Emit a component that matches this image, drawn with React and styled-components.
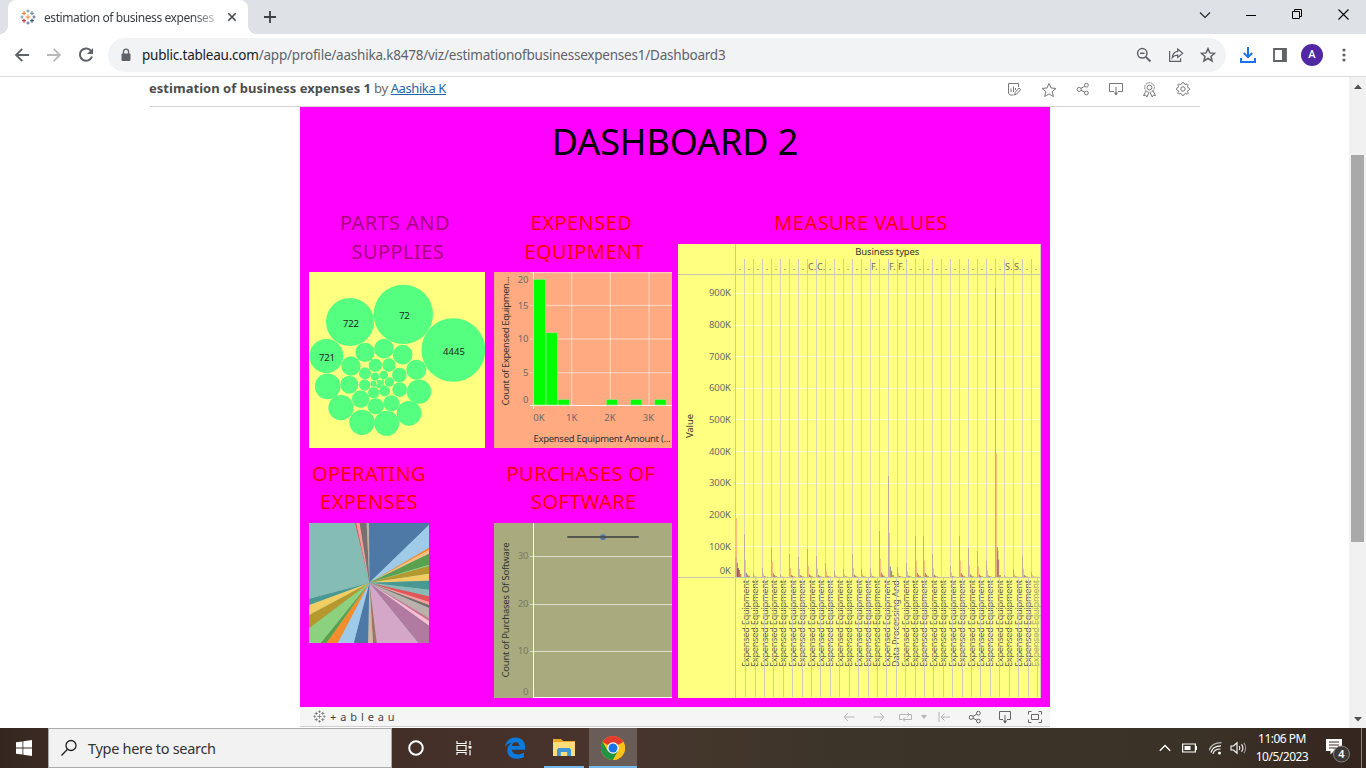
import React from "react";
import styled, { createGlobalStyle } from "styled-components";

const UI = `"Noto Sans", "Open Sans", sans-serif`;

const GlobalStyle = createGlobalStyle`
  * { box-sizing: border-box; }
  body { margin: 0; overflow: hidden; background: #fff; font-family: ${UI}; }
  svg { display: block; flex: none; }
`;

const Screen = styled.div`
  width: 1366px;
  height: 768px;
  display: flex;
  flex-direction: column;
  overflow: hidden;
`;

/* ---------- browser chrome ---------- */
const TabStrip = styled.header`
  height: 34px;
  background: #dee1e6;
  display: flex;
  align-items: stretch;
`;
const TabCurve = styled.div`
  width: 8px;
  align-self: flex-end;
  height: 8px;
  background: radial-gradient(circle at ${(p) => (p.$side === "left" ? "0 0" : "100% 0")}, #dee1e6 7.5px, #fff 8.2px);
`;
const Tab = styled.div`
  width: 240px;
  background: #fff;
  border-radius: 8px 8px 0 0;
  display: flex;
  align-items: center;
  padding: 0 11px 0 12px;
`;
const TabTitle = styled.div`
  width: 171px;
  margin-left: 8px;
  margin-right: 12px;
  font-size: 12px;
  letter-spacing: -0.42px;
  color: #3c4043;
  white-space: nowrap;
  mask-image: linear-gradient(90deg, #000 148px, rgba(0, 0, 0, 0.3) 171px);
`;
const NewTab = styled.div`
  padding-left: 7px;
  display: flex;
  align-items: center;
`;
const WindowButtons = styled.div`
  margin-left: auto;
  display: flex;
  align-items: center;
  padding-bottom: 5px;
`;
const WindowButton = styled.div`
  width: 46px;
  display: flex;
  justify-content: center;
`;
const Toolbar = styled.div`
  height: 43px;
  border-bottom: 1px solid #dadce0;
  display: flex;
  align-items: center;
  padding: 0 13px 0 14px;
`;
const NavButton = styled.div`
  width: 32px;
`;
const Omnibox = styled.div`
  width: 1118px;
  height: 34px;
  border-radius: 17px;
  background: #f1f3f4;
  margin-left: -2px;
  padding: 0 10px 0 12px;
  display: flex;
  align-items: center;
`;
const Url = styled.div`
  font-size: 13.5px;
  letter-spacing: -0.22px;
  margin-left: 10px;
  color: #5f6368;
  white-space: nowrap;
  b { font-weight: 400; color: #202124; }
`;
const OmniboxIcons = styled.div`
  margin-left: auto;
  display: flex;
  gap: 16px;
`;
const ToolbarIcons = styled.div`
  display: flex;
  align-items: center;
  margin-left: 14px;
  flex: 1;
`;
const Avatar = styled.div`
  width: 22px;
  height: 22px;
  border-radius: 50%;
  background: #5028a4;
  color: #fff;
  font: 500 11px/22px Roboto, sans-serif;
  text-align: center;
  margin: 0 19px 0 14px;
`;

/* ---------- page ---------- */
const PageArea = styled.div`
  flex: 1;
  display: flex;
  min-height: 0;
`;
const Page = styled.main`
  flex: 1;
  padding-left: 150px;
`;
const Scrollbar = styled.div`
  width: 17px;
  background: #f1f1f1;
  display: flex;
  flex-direction: column;
  align-items: center;
  justify-content: space-between;
  padding: 7px 0 6px;
`;
const Thumb = styled.div`
  width: 13px;
  height: 387px;
  background: #a9a9a9;
  margin-bottom: 109px;
`;
const VizHeader = styled.div`
  width: 1050px;
  height: 30px;
  border-bottom: 1px solid #d4d4d4;
  display: flex;
  align-items: flex-start;
  justify-content: space-between;
  padding-right: 10px;
`;
const VizTitle = styled.div`
  font-size: 13px;
  line-height: 18px;
  margin: 2px 0 0 -1px;
  color: #6a6a6a;
  letter-spacing: -0.4px;
  white-space: nowrap;
  b { color: #4d4d4d; letter-spacing: 0.03px; }
  a { color: #1f67a8; text-decoration: underline; }
`;
const VizActions = styled.div`
  display: flex;
  gap: 19px;
  padding-top: 5px;
`;
const Viz = styled.section`
  width: 750px;
  margin-left: 150px;
`;
const Dashboard = styled.div`
  height: 600px;
  background: #ff00ff;
  padding: 0 9px;
`;
const DashboardTitle = styled.h1`
  margin: 0;
  height: 101px;
  padding-top: 9px;
  text-align: center;
  font-weight: 400;
  font-size: 36px;
  line-height: 51px;
  letter-spacing: -0.1px;
  color: #000;
`;
const Columns = styled.div`
  display: grid;
  grid-template-columns: 176px 178px 363px;
  column-gap: 9px;
  & > :last-child { margin-left: -3px; }
`;
const Column = styled.div`
  display: flex;
  flex-direction: column;
`;
const SheetTitle = styled.h2`
  margin: 0;
  height: ${(p) => p.$h || 64}px;
  margin-right: ${(p) => p.$trim || 0}px;
  text-align: center;
  font-weight: 400;
  font-size: 20px;
  line-height: ${(p) => p.$lh || 29}px;
  letter-spacing: 0.43px;
  color: ${(p) => p.$color || "#ff0000"};
  white-space: pre;
`;
const Sheet = styled.div`
  width: ${(p) => p.$w}px;
  height: ${(p) => p.$h}px;
  background: ${(p) => p.$bg};
  margin-bottom: ${(p) => p.$gap || 0}px;
  overflow: hidden;
`;
const VizFooter = styled.div`
  height: 20px;
  background: #f5f5f5;
  border-bottom: 1px solid #cfcfcf;
  display: flex;
  align-items: center;
  padding: 0 8px 0 13px;
`;
const Wordmark = styled.div`
  font-size: 11px;
  line-height: 18px;
  letter-spacing: 3.9px;
  color: #444;
  margin-left: 4px;
`;
const FooterIcons = styled.div`
  margin-left: auto;
  display: flex;
  align-items: center;
`;

/* ---------- taskbar ---------- */
const Taskbar = styled.footer`
  height: 40px;
  display: flex;
  align-items: stretch;
  background: linear-gradient(90deg, #35271f 0, #3a2a23 50px, #442f29 430px, #49352d 620px, #43362b 700px, #3c3428 850px, #3b3227 1200px, #34251f 1366px);
`;
const StartButton = styled.div`
  width: 48px;
  display: flex;
  align-items: center;
  justify-content: center;
`;
const SearchBox = styled.div`
  width: 344px;
  background: #f2f2f2;
  border: 1px solid #ababab;
  display: flex;
  align-items: center;
  padding-left: 11px;
  font-size: 14.5px;
  letter-spacing: -0.3px;
  color: #333;
  gap: 10px;
`;
const TaskItem = styled.div`
  width: ${(p) => p.$w}px;
  display: flex;
  align-items: center;
  justify-content: center;
  background: ${(p) => (p.$active ? "#6a5c57" : "transparent")};
  box-shadow: ${(p) => (p.$open ? "inset 0 -2px #76b9ed" : "none")};
  margin-right: ${(p) => p.$gap || 0}px;
`;
const Tray = styled.div`
  margin-left: auto;
  display: flex;
  align-items: center;
`;
const Clock = styled.div`
  width: 66px;
  text-align: center;
  color: #fff;
  font-size: 12px;
  line-height: 18px;
  letter-spacing: -0.5px;
  margin: 0 10px 0 2px;
`;
const Notifications = styled.div`
  padding-top: 4px;
  margin-right: 10px;
`;
const ShowDesktop = styled.div`
  width: 5px;
  align-self: stretch;
  border-left: 1px solid #8b817c;
`;

/* ---------- icon drawings ---------- */
const Glyph = styled.svg`
  margin-right: ${(p) => p.$mr || 0}px;
`;
const Ic = ({ w = 16, h = w, vb, c = "#5f6368", sw = 1.5, mr = 0, children }) => (
  <Glyph width={w} height={h} viewBox={vb || `0 0 ${w} ${h}`} fill="none" stroke={c} strokeWidth={sw} $mr={mr}>
    {children}
  </Glyph>
);
const plus = (x, y, r) => `M${x - r} ${y}h${2 * r}M${x} ${y - r}v${2 * r}`;
const TableauMark = ({ size = 16, mono }) => {
  const c = (v) => (mono ? "#777" : v);
  return (
    <Ic w={size} vb="0 0 16 16" sw={mono ? 1 : 1.1}>
      <path d={plus(8, 8, 2.6)} stroke={c("#eb8e45")} />
      <path d={plus(4, 4.3, 2)} stroke={c("#e8762d")} />
      <path d={plus(12, 4.3, 2)} stroke={c("#5b879b")} />
      <path d={plus(4, 11.8, 2)} stroke={c("#c72035")} />
      <path d={plus(12, 11.8, 2)} stroke={c("#1f457e")} />
      <path d={plus(8, 2, 1.6)} stroke={c("#7199a6")} />
      <path d={plus(8, 14, 1.6)} stroke={c("#5c6692")} />
      <path d={plus(2, 8, 1.5)} stroke={c("#7099a6")} />
      <path d={plus(14, 8, 1.5)} stroke={c("#5c6692")} />
    </Ic>
  );
};
const starPath = "M8 1.6l1.9 4.3 4.6.4-3.5 3.1 1.1 4.6L8 11.5 3.9 14 5 9.4 1.5 6.3l4.6-.4z";
const ShareNodes = ({ c = "#666", mr }) => (
  <Ic w={14} c={c} sw={1} mr={mr}>
    <circle cx="3.2" cy="7.4" r="2" />
    <circle cx="10.4" cy="3.2" r="1.9" />
    <circle cx="10.4" cy="11" r="1.9" />
    <path d="M5 6.4l3.7-2.2M5 8.3l3.7 1.8" />
  </Ic>
);
const DownloadBox = ({ c = "#666", w = 14, mr }) => (
  <Ic w={w} h={14} vb={`${(14 - w) / 2} 0 ${w} 14`} c={c} sw={1} mr={mr}>
    <path d={w === 14 ? "M5 9.5H.5v-8h13v8H9M7 5v8" : "M5 9.5H1.5v-8h11v8H9M7 5v8"} />
    <path d="M4.800 10.600h4.400L7 13.400z" fill={c} stroke="none" />
  </Ic>
);
const gearPath = (() => {
  const pts = [];
  for (let i = 0; i < 32; i++) {
    const a = ((i - 0.5) / 32) * Math.PI * 2;
    const r = i % 4 < 2 ? 6.6 : 5.1;
    pts.push(`${(7 + r * Math.cos(a)).toFixed(2)} ${(7 + r * Math.sin(a)).toFixed(2)}`);
  }
  return `M${pts.join("L")}Z`;
})();

/* ---------- charts ---------- */
const T = ({ x, y, s = 9.5, w, fill = "#6b6b6b", a = "start", rot, children }) => (
  <text
    x={x}
    y={y}
    fontSize={s}
    fill={fill}
    textAnchor={a}
    transform={rot ? `rotate(-90 ${x} ${y})` : undefined}
    textLength={w}
    fontFamily={UI}
  >
    {children}
  </text>
);

const bubbles = [
  [283, 127, 89], [123, 150, 72], [433, 234, 95.5], [52, 252, 51], [168, 241, 29], [225, 230, 29.5],
  [281, 248, 29.5], [126, 282, 29], [199, 280, 20], [240, 279, 20], [322, 293, 30], [168, 304, 18],
  [198, 314, 12.5], [224, 309, 13], [271, 309, 22], [56, 343, 38.5], [121, 338, 27], [167, 339, 17],
  [193, 335, 9], [210, 330, 6.5], [209, 341, 7.5], [219, 333, 6], [223, 342, 4.5], [221, 325, 3.5], [241, 330, 14], [272, 353, 22],
  [330, 359, 36.5], [194, 362, 17], [227, 357, 16], [155, 381, 26], [247, 394, 24.5], [200, 403, 24.5],
  [96, 407, 38], [159, 451, 38], [233, 454, 37.5], [300, 424, 37],
];
const BubbleChart = () => (
  <svg width="176" height="176">
    <g transform="scale(0.33333)" fill="#55ff80">
      {bubbles.map(([x, y, r], i) => <circle key={i} cx={x} cy={y} r={r} />)}
    </g>
    <T x={95.5} y={47} w={10.5} a="middle" fill="#222">72</T>
    <T x={42} y={54.7} w={16} a="middle" fill="#222">722</T>
    <T x={145} y={82.7} w={22} a="middle" fill="#222">4445</T>
    <T x={18} y={88.7} w={16} a="middle" fill="#222">721</T>
  </svg>
);

const slices = [
  [[180, 0], "#4e79a7", [360, 0]], [[360, 6], "#a0cbe8"], [[360, 74], "#f28e2b"], [[360, 80], "#ffbe7d"],
  [[360, 92], "#59a14f"], [[360, 125], "#8cd17d"], [[360, 129], "#b6992d"], [[360, 152], "#f1ce63"],
  [[360, 173], "#499894"], [[360, 200], "#86bcb6"], [[360, 220], "#e15759"], [[360, 237], "#ff9d9a"],
  [[360, 246], "#79706e"], [[360, 255], "#bab0ac"], [[360, 286], "#d37295"], [[360, 294], "#fabfd2"],
  [[360, 308], "#b07aa1", [360, 360]], [[328, 360], "#d4a6c8"], [[203, 360], "#9d7660"], [[192, 360], "#d7b5a6"],
  [[177, 360], "#4e79a7"], [[134, 360], "#a0cbe8"], [[86, 360], "#f28e2b"], [[52, 360], "#59a14f"],
  [[35, 360], "#8cd17d", [0, 360]], [[0, 316], "#b6992d"], [[0, 276], "#f1ce63"], [[0, 246], "#499894"],
  [[0, 227], "#86bcb6", [0, 0]], [[138, 0], "#e15759"], [[142, 0], "#ff9d9a"], [[152, 0], "#79706e"], [[173, 0], "#bab0ac"],
];
const PieChart = () => (
  <svg width="120" height="120" viewBox="0 0 360 360">
    {slices.map(([p, color, corner], i) => {
      const end = slices[(i + 1) % slices.length][0];
      return <polygon key={i} fill={color} points={[p, corner, end, [181, 179]].filter(Boolean).join(" ")} />;
    })}
  </svg>
);

const Histogram = () => (
  <svg width="178" height="176">
    <g stroke="#fff" strokeOpacity="0.42" strokeWidth="1.3">
      {[77.7, 116.3, 155].map((x) => <path key={x} d={`M${x} 0V133`} />)}
      {[0.5, 33.5, 67, 100.7].map((y) => <path key={y} d={`M36 ${y}H178`} />)}
    </g>
    <path d="M39.500 0V137M36 133.500H178" stroke="#fff" strokeOpacity="0.9" />
    <g fill="#00ff00" stroke="#a8dc90" strokeWidth="0.7">
      {[[39.7, 7.3, 12], [52, 60.8, 11.6], [64, 127.5, 11.4], [112.3, 127.5, 11.4], [136.5, 127.5, 11.4], [160.7, 127.5, 11.4]].map(
        ([x, y, w]) => <rect key={x} x={x} y={y} width={w} height={133 - y} />
      )}
    </g>
    <T x={34.5} y={10.5} a="end">20</T>
    <T x={34.5} y={36.5} a="end">15</T>
    <T x={34.5} y={70} a="end">10</T>
    <T x={34.5} y={104.3} a="end">5</T>
    <T x={34.5} y={130.5} a="end">0</T>
    <T x={45} y={149} a="middle">0K</T>
    <T x={77.7} y={149} a="middle">1K</T>
    <T x={116} y={149} a="middle">2K</T>
    <T x={154.5} y={149} a="middle">3K</T>
    <T x={39.5} y={170} w={137} fill="#333">Expensed Equipment Amount (...</T>
    <T x={15} y={133.5} w={129} fill="#333" rot>Count of Expensed Equipmen...</T>
  </svg>
);

const SoftwareChart = () => (
  <svg width="178" height="175">
    <g stroke="#fff" strokeOpacity="0.6">
      {[33.5, 81.5, 128.5].map((y) => <path key={y} d={`M36 ${y}H178`} />)}
    </g>
    <path d="M39.500 0V175M39.500 174.500H178" stroke="#fff" strokeOpacity="0.9" />
    <circle cx="109" cy="14.200" r="2.900" fill="#4e79a7" />
    <path d="M73.300 14H144.700" stroke="#4d4d4d" strokeWidth="1.800" strokeOpacity="0.9" />
    <T x={34.5} y={36.3} a="end" fill="#777a66">30</T>
    <T x={34.5} y={84.3} a="end" fill="#777a66">20</T>
    <T x={34.5} y={131.3} a="end" fill="#777a66">10</T>
    <T x={34.5} y={172} a="end" fill="#777a66">0</T>
    <T x={15} y={154.5} w={135} fill="#333" rot>Count of Purchases Of Software</T>
  </svg>
);

const spikes = [0, 43, 4, 9, 29, 3, 23, 20, 28, 21, 14, 6, 8, 23, 8, 9, 46, 101, 10, 14, 41, 41, 23, 0, 11, 41, 29, 26, 16, 289, 2, 8, 21, 5];
const seconds = { 0: 59, 4: 15, 17: 44, 29: 124 };
const letters = { 8: "C.", 9: "C.", 15: "F.", 17: "F.", 18: "F.", 30: "S.", 31: "S." };
const COL = 8.97;
const BASE = 333;
const snap = (v) => Math.floor(v) + 0.5;
const MeasureChart = () => (
  <svg width="363" height="454">
    <g stroke="#fff" strokeOpacity="0.62">
      {Array.from({ length: 9 }, (_, i) => <path key={i} d={`M55 ${snap(49.4 + i * 31.6)}H362`} />)}
    </g>
    {spikes.map((_, i) => {
      const x = snap(57.6 + i * COL);
      return (
        <g key={i}>
          <path d={`M${x} ${i ? 15 : 0}V31`} stroke="#c8c8be" />
          <path d={`M${x} 31V${BASE}`} stroke={i ? "#d9d9b8" : "#c9c9b8"} />
          {letters[i] ? (
            <T x={x + 0.6} y={26} s={9}>{letters[i]}</T>
          ) : (
            <T x={x + 3.2} y={26} s={9}>.</T>
          )}
        </g>
      );
    })}
    <path d="M362.500 0V454" stroke="#ccccb8" />
    {spikes.map((h, i) => {
      const x = snap(57.6 + i * COL) - 0.5;
      const s = seconds[i] || h * 0.4;
      return (
        <g key={i}>
          <rect x={x + 0.8} y={BASE - s} width="1.200" height={s} fill="#ffbe80" />
          <rect x={x} y={BASE - h} width="1" height={h} fill="#c0aaa4" />
          <rect x={x + 1.8} y={BASE - s * 0.24} width="1.100" height={s * 0.24} fill="#8c8f98" />
          <rect x={x + 2.8} y={BASE - s * 0.14} width="1.300" height={s * 0.14} fill="#dc7560" />
          <rect x={x + 4.1} y={BASE - Math.min(2, s * 0.07)} width="1.800" height={Math.min(2, s * 0.07)} fill="#c59a4f" />
        </g>
      );
    })}
    <rect x="57.500" y={BASE - 20} width="1" height="20" fill="#c59aa0" />
    <rect x="59" y={BASE - 9} width="1.600" height="9" fill="#6d6a7a" />
    <rect x="60.600" y={BASE - 7} width="1.300" height="7" fill="#d9604f" />
    <rect x="62" y={BASE - 3} width="1.400" height="3" fill="#d08a4a" />
    <rect x="319" y={BASE - 26} width="1.300" height="26" fill="#98808c" />
    <path d="M0 30.500H362M0 333.500H362" stroke="#c6c6b2" />
    <path d="M57.500 333V454" stroke="#c9c9b8" />
    {Array.from({ length: 32 }, (_, i) => {
      const x = 67.7 + i * 9.41;
      return (
        <g key={i}>
          <T x={i === 31 ? 360.6 : x + 3} y={423} s={9.2} w={87} fill={i === 31 ? "#a8a870" : "#5c5c50"} rot>
            {i === 16 ? "Data Processing And" : "Expensed Equipment"}
          </T>
          <path d={`M${snap(x)} 334V453`} stroke="#c8c8c0" strokeOpacity="0.9" />
        </g>
      );
    })}
    {[900, 800, 700, 600, 500, 400, 300, 200, 100].map((v, i) => (
      <T key={v} x={53} y={52.3 + i * 31.65} w={22} a="end">{v}K</T>
    ))}
    <T x={53} y={330} a="end">0K</T>
    <T x={209.3} y={11} w={64} a="middle" fill="#333">Business types</T>
    <T x={15} y={194} w={24} fill="#333" rot>Value</T>
  </svg>
);

/* ---------- app ---------- */
export default function App() {
  return (
    <Screen>
      <GlobalStyle />
      <TabStrip>
        <TabCurve $side="left" />
        <Tab>
          <TableauMark />
          <TabTitle>estimation of business expenses</TabTitle>
          <Ic w={10} c="#45494d" sw={1.6}><path d="M1.300 1.300l7.400 7.400M8.700 1.300L1.300 8.700" /></Ic>
        </Tab>
        <TabCurve $side="right" />
        <NewTab>
          <Ic w={14} c="#3c4043" sw={1.8}><path d="M7 1v12M1 7h12" /></Ic>
        </NewTab>
        <WindowButtons>
          <WindowButton><Ic w={12} c="#222" sw={1.1}><path d="M1 3.500l5 5 5-5" /></Ic></WindowButton>
          <WindowButton><Ic w={10} c="#000" sw={1}><path d="M0 5.500h10" /></Ic></WindowButton>
          <WindowButton><Ic w={11} c="#000" sw={1}><path d="M.5 2.500h7v7h-7zM2.500 2.500v-2h7v7h-2" /></Ic></WindowButton>
          <WindowButton><Ic w={11} c="#000" sw={1.1}><path d="M.5.5l10 10M10.500.5l-10 10" /></Ic></WindowButton>
        </WindowButtons>
      </TabStrip>

      <Toolbar>
        <NavButton><Ic c="#5f6368" sw={1.9}><path d="M15 8H2.500M8.300 1.800L2.100 8l6.200 6.200" /></Ic></NavButton>
        <NavButton><Ic c="#bababa" sw={1.9}><path d="M1 8h12.500M7.700 1.800L13.900 8l-6.200 6.200" /></Ic></NavButton>
        <NavButton>
          <Ic sw={2}>
            <path d="M13.300 4.200A6.200 6.200 0 1 0 14 9.500" />
            <path d="M15 1v6H9z" fill="#5f6368" stroke="none" />
          </Ic>
        </NavButton>
        <Omnibox>
          <Ic w={12} h={14} sw={1.4}>
            <path d="M3.500 6V3.600a2.500 2.500 0 0 1 5 0V6" />
            <rect x="1.500" y="5.500" width="9" height="7.500" rx="1" fill="#5f6368" stroke="none" />
          </Ic>
          <Url><b>public.tableau.com</b>/app/profile/aashika.k8478/viz/estimationofbusinessexpenses1/Dashboard3</Url>
          <OmniboxIcons>
            <Ic sw={1.5}><circle cx="6.300" cy="6.300" r="4.700" /><path d="M9.800 9.800l4.700 4.700" strokeWidth="1.900" /><path d="M4 6.300h4.600" /></Ic>
            <Ic sw={1.2}>
              <path d="M1.600 4v10.400h11v-3.200" />
              <path d="M9.700 2l5 4.300-5 4.200V8.200c-2.700 0-4.200.8-5.500 2.500.4-3.200 2.200-5.900 5.500-6.300z" />
            </Ic>
            <Ic sw={1.5}><path d={starPath} /></Ic>
          </OmniboxIcons>
        </Omnibox>
        <ToolbarIcons>
          <Ic w={16} c="#1a73e8" sw={2} mr={17}><path d="M8 0v9.500M3.800 6L8 10.200 12.200 6M1 11v4h14v-4" /></Ic>
          <Ic w={14} sw={1.8}><path d="M1 1h12v12H1z" /><path d="M9 1h4v12H9z" fill="#5f6368" stroke="none" /></Ic>
          <Avatar>A</Avatar>
          <Ic w={4} h={14}><g fill="#5f6368" stroke="none"><circle cx="2" cy="2" r="1.600" /><circle cx="2" cy="7" r="1.600" /><circle cx="2" cy="12" r="1.600" /></g></Ic>
        </ToolbarIcons>
      </Toolbar>

      <PageArea>
        <Page>
          <VizHeader>
            <VizTitle><b>estimation of business expenses 1</b> by <a>Aashika K</a></VizTitle>
            <VizActions>
              <Ic w={16} h={15} c="#777" sw={1}><path d="M12.500 5V1.500H2.500v10l2 1.500h3M5 6.500v3.500M7.500 4.500v5.500M9.500 6v2" /><path d="M8.500 13l.7-2.500L13 6l1.700 1.600-4.300 4.700z" /></Ic>
              <Ic w={16} c="#777" sw={1}><path d="M8 1.500l2 4.500 5 .4-3.800 3.200 1.200 4.900L8 11.900l-4.400 2.600 1.200-4.900L1 6.400l5-.4z" /></Ic>
              <ShareNodes c="#777" />
              <DownloadBox c="#777" />
              <Ic w={15} c="#777" sw={1}>
                <circle cx="7.500" cy="5.500" r="4.800" strokeDasharray="2 .6" /><circle cx="7.500" cy="5.500" r="2.400" />
                <path d="M4 9l-2.500 4.500 2.300-.3 1 1.800 2-4M11 9l2.500 4.500-2.300-.3-1 1.800-2-4" />
              </Ic>
              <Ic w={14} c="#777" sw={1}><path d={gearPath} /><circle cx="7" cy="7" r="2.200" /></Ic>
            </VizActions>
          </VizHeader>
          <Viz>
            <Dashboard>
              <DashboardTitle>DASHBOARD 2</DashboardTitle>
              <Columns>
                <Column>
                  <SheetTitle $color="#aa0080" $trim={4}>{"PARTS AND\n SUPPLIES"}</SheetTitle>
                  <Sheet $w={176} $h={176} $bg="#ffff80" $gap={12}><BubbleChart /></Sheet>
                  <SheetTitle $h={63} $trim={56} $lh={28}>{"OPERATING\nEXPENSES"}</SheetTitle>
                  <Sheet $w={120} $h={120} $bg="#86bcb6"><PieChart /></Sheet>
                </Column>
                <Column>
                  <SheetTitle $trim={3}>{"EXPENSED\n EQUIPMENT"}</SheetTitle>
                  <Sheet $w={178} $h={176} $bg="#ffaa80" $gap={12}><Histogram /></Sheet>
                  <SheetTitle $h={63} $trim={4} $lh={28}>{"PURCHASES OF\n SOFTWARE"}</SheetTitle>
                  <Sheet $w={178} $h={175} $bg="#aaaa7f"><SoftwareChart /></Sheet>
                </Column>
                <Column>
                  <SheetTitle $h={36}>MEASURE VALUES</SheetTitle>
                  <Sheet $w={363} $h={454} $bg="#ffff80"><MeasureChart /></Sheet>
                </Column>
              </Columns>
            </Dashboard>
            <VizFooter>
              <TableauMark size={13} mono />
              <Wordmark>+ableau</Wordmark>
              <FooterIcons>
                <Ic w={12} c="#b4b4b4" sw={1} mr={18}><path d="M11.500 6H1M5 2L1 6l4 4" /></Ic>
                <Ic w={12} c="#b4b4b4" sw={1} mr={13}><path d="M.5 6H11M7 2l4 4-4 4" /></Ic>
                <Ic w={15} h={12} c="#b4b4b4" sw={1} mr={8}><path d="M4 8.500H1.500v-5h10M9.500 1.500l2 2-2 2M11 3.500h2.500v5H5M7 6.500l-2 2 2 2" /></Ic>
                <Ic w={6} h={4} mr={11}><path d="M0 0h6L3 4z" fill="#b4b4b4" stroke="none" /></Ic>
                <Ic w={12} c="#b4b4b4" sw={1} mr={18}><path d="M1 1v10M12 6H3M6.500 2.500L3 6l3.500 3.500" /></Ic>
                <ShareNodes mr={17} />
                <DownloadBox w={12} mr={17} />
                <Ic w={14} h={12} c="#666" sw={1}><path d="M3.500 3.500h7v5h-7zM.5 3.500v-3h3M10.500.5h3v3M.5 8.500v3h3M10.500 11.500h3v-3" /></Ic>
              </FooterIcons>
            </VizFooter>
          </Viz>
        </Page>
        <Scrollbar>
          <Ic w={8} h={5}><path d="M0 5h8L4 .5z" fill="#505050" stroke="none" /></Ic>
          <Thumb />
          <Ic w={8} h={5}><path d="M0 0h8L4 4.500z" fill="#505050" stroke="none" /></Ic>
        </Scrollbar>
      </PageArea>

      <Taskbar>
        <StartButton>
          <Ic w={16}><path d="M0 2.300l6.500-.9v6.200H0zM7.300 1.300L16 0v7.600H7.300zM0 8.400h6.500v6.200L0 13.700zM7.300 8.400H16V16l-8.700-1.300z" fill="#fff" stroke="none" /></Ic>
        </StartButton>
        <SearchBox>
          <Ic w={18} c="#222" sw={1.3}><circle cx="11" cy="6.500" r="5" /><path d="M7.500 10.200L1.500 16.500" /></Ic>
          Type here to search
        </SearchBox>
        <TaskItem $w={48}><Ic w={18} c="#fff" sw={2}><circle cx="9" cy="9" r="6.800" /></Ic></TaskItem>
        <TaskItem $w={48} $gap={8}>
          <Ic w={16} c="#fff" sw={1.2}><path d="M1 1v2.500h9V1M1 15v-2.500h9V15M1 5.500h9v5H1zM14 1v4M14 10v5.500" /><path d="M12.500 6h3v2.500h-3z" fill="#fff" stroke="none" /></Ic>
        </TaskItem>
        <TaskItem $w={38} $gap={10}>
          <Ic w={22}>
            <path d="M1 10.200C1.500 4.500 5.500.5 11.400.5c6 0 9.800 4.200 9.800 9.600v2.700H7.900c.2 3.100 2.700 4.600 5.900 4.600 2.300 0 4.300-.7 6.200-1.800v4.500c-2 1.100-4.500 1.700-7.200 1.700C7 21.800 3.300 18.400 3.300 13.600c0-3.600 1.900-6.400 5.100-7.900C4.900 5.900 2.600 7.600 1 10.200zM8 9h7.400c0-2.300-1.200-3.800-3.600-3.800C9.600 5.200 8.300 6.800 8 9z" fill="#0a7bdc" stroke="none" />
          </Ic>
        </TaskItem>
        <TaskItem $w={40} $open $gap={5}>
          <Ic w={22} h={20}>
            <g stroke="none">
              <path d="M0 1h8l2 2h12v15H0z" fill="#e9a825" /><path d="M0 4h22v14H0z" fill="#fddc7b" />
              <path d="M4 18v-6.500l1.500-1.500h11l1.500 1.500V18h-3.800v-4H7.800v4z" fill="#3f96d6" />
            </g>
          </Ic>
        </TaskItem>
        <TaskItem $w={48} $open $active>
          <Ic w={24}>
            <g stroke="none">
              <circle cx="12" cy="12" r="12" fill="#fbc116" />
              <path d="M12 12L1.600 6A12 12 0 0 1 22.400 6z" fill="#e33b2e" />
              <path d="M1.600 6A12 12 0 0 0 12 24l5.200-9L12 12 6.800 15z" fill="#229342" />
              <path d="M12 24l5.200-9L12 12l10.400-6A12 12 0 0 1 12 24z" fill="#fbc116" />
              <circle cx="12" cy="12" r="5.800" fill="#fff" /><circle cx="12" cy="12" r="4.500" fill="#1a73e8" />
            </g>
          </Ic>
        </TaskItem>
        <Tray>
          <Ic w={12} h={8} c="#fff" sw={1.3} mr={11}><path d="M.8 6.800L6 1.500l5.200 5.300" /></Ic>
          <Ic w={16} h={10} c="#fff" sw={1.2} mr={11}><path d="M.6 1h12.800v8H.6z" /><path d="M2.500 3h6v4h-6zM13.500 3H15v4h-1.500z" fill="#fff" stroke="none" /></Ic>
          <Ic w={13} h={14} c="#fff" sw={1.2} mr={8}>
            <path d="M4 13C4.500 10.500 7 8 11.500 8" opacity=".95" /><path d="M2 11.500C3 7.500 6.500 4.800 12 4.800" /><path d="M0 9.500C1.500 5 6 1.600 12.500 1.600" opacity=".7" /><circle cx="10.500" cy="12" r="1.500" fill="#fff" stroke="none" />
          </Ic>
          <Ic w={17} h={14} c="#fff" sw={1.1}>
            <path d="M1 5h2.500L7 1.800v10.400L3.500 9H1z" /><path d="M9.200 5c.9 1.200.9 2.800 0 4M11.500 3.300c1.700 2.200 1.700 5.200 0 7.400" /><path d="M13.800 1.800c2.400 3 2.400 7.400 0 10.400" opacity=".5" />
          </Ic>
          <Clock>11:06 PM<br />10/5/2023</Clock>
          <Notifications>
            <Ic w={26}>
              <path d="M1 2h16v12H9l-3.500 3.500V14H1z" fill="#fff" stroke="none" />
              <path d="M4 5h10M4 8h10M4 11h7" stroke="#3a2c25" strokeWidth="1.100" />
              <circle cx="16.500" cy="17" r="8" fill="#3e3a38" stroke="#8a8583" strokeWidth="1" />
              <text x="16.500" y="21" fontSize="11" fontWeight="600" fill="#fff" stroke="none" textAnchor="middle" fontFamily={UI}>4</text>
            </Ic>
          </Notifications>
          <ShowDesktop />
        </Tray>
      </Taskbar>
    </Screen>
  );
}
